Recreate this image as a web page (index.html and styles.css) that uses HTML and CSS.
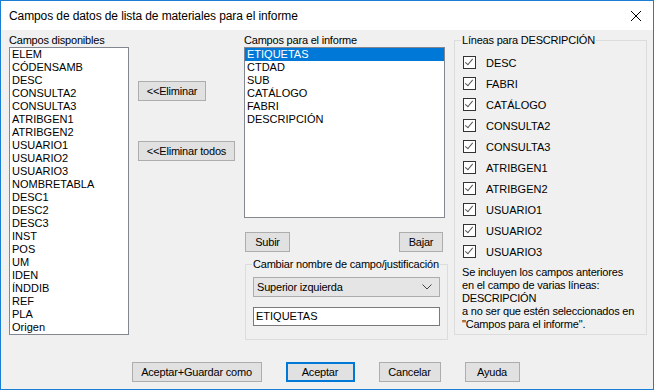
FILE: index.html
```html
<!DOCTYPE html>
<html lang="es">
<head>
  <meta charset="UTF-8" />
  <meta name="viewport" content="width=device-width, initial-scale=1.0" />
  <title>Campos de datos de lista de materiales para el informe</title>
  <link rel="stylesheet" href="styles.css">
</head>
<body>
  <div class="window">
    <div class="titlebar">
      <span class="title">Campos de datos de lista de materiales para el informe</span>
      <svg class="close" width="12" height="12" viewBox="0 0 12 12">
        <path d="M1 1 L11 11 M11 1 L1 11" stroke="#000" stroke-width="1" fill="none"/>
      </svg>
    </div>

    <div class="dialog">
      <div class="main">
        <!-- Campos disponibles -->
        <div class="col-avail">
          <div class="label">Campos disponibles</div>
          <ul class="listbox avail-list">
            <li>ELEM</li>
            <li>CÓDENSAMB</li>
            <li>DESC</li>
            <li>CONSULTA2</li>
            <li>CONSULTA3</li>
            <li>ATRIBGEN1</li>
            <li>ATRIBGEN2</li>
            <li>USUARIO1</li>
            <li>USUARIO2</li>
            <li>USUARIO3</li>
            <li>NOMBRETABLA</li>
            <li>DESC1</li>
            <li>DESC2</li>
            <li>DESC3</li>
            <li>INST</li>
            <li>POS</li>
            <li>UM</li>
            <li>IDEN</li>
            <li>ÍNDDIB</li>
            <li>REF</li>
            <li>PLA</li>
            <li>Origen</li>
          </ul>
        </div>

        <div class="col-actions">
          <button class="btn btn-remove">&lt;&lt;Eliminar</button>
          <button class="btn btn-remove-all">&lt;&lt;Eliminar todos</button>
        </div>

        <!-- Campos para el informe -->
        <div class="col-report">
          <div class="label">Campos para el informe</div>
          <ul class="listbox report-list">
            <li class="selected">ETIQUETAS</li>
            <li>CTDAD</li>
            <li>SUB</li>
            <li>CATÁLOGO</li>
            <li>FABRI</li>
            <li>DESCRIPCIÓN</li>
          </ul>
          <div class="move-row">
            <button class="btn btn-up">Subir</button>
            <button class="btn btn-down">Bajar</button>
          </div>
          <fieldset class="group rename-group">
            <legend>Cambiar nombre de campo/justificación</legend>
            <div class="combo">
              <span>Superior izquierda</span>
              <svg width="10" height="6" viewBox="0 0 10 6">
                <path d="M0.5 0.5 L5 5 L9.5 0.5" stroke="#444" stroke-width="1" fill="none"/>
              </svg>
            </div>
            <div class="textbox">ETIQUETAS</div>
          </fieldset>
        </div>

        <!-- Líneas para DESCRIPCIÓN -->
        <fieldset class="group lines-group">
          <legend>Líneas para DESCRIPCIÓN</legend>
          <ul class="checklist">
            <li><span class="check"></span>DESC</li>
            <li><span class="check"></span>FABRI</li>
            <li><span class="check"></span>CATÁLOGO</li>
            <li><span class="check"></span>CONSULTA2</li>
            <li><span class="check"></span>CONSULTA3</li>
            <li><span class="check"></span>ATRIBGEN1</li>
            <li><span class="check"></span>ATRIBGEN2</li>
            <li><span class="check"></span>USUARIO1</li>
            <li><span class="check"></span>USUARIO2</li>
            <li><span class="check"></span>USUARIO3</li>
          </ul>
          <p class="note">Se incluyen los campos anteriores<br>en el campo de varias líneas:<br>DESCRIPCIÓN<br>a no ser que estén seleccionados en<br>"Campos para el informe".</p>
        </fieldset>
      </div>

      <div class="footer">
        <button class="btn btn-save">Aceptar+Guardar como</button>
        <button class="btn btn-ok">Aceptar</button>
        <button class="btn btn-cancel">Cancelar</button>
        <button class="btn btn-help">Ayuda</button>
      </div>
    </div>
  </div>
</body>
</html>
```

FILE: styles.css
```css
html, body {
  margin: 0;
  padding: 0;
}

*, *::before, *::after {
  box-sizing: border-box;
}

body {
  font-family: "Liberation Sans", Arial, sans-serif;
  font-size: 11px;
  color: #000;
  background: #fff;
}

.window {
  width: 654px;
  height: 390px;
  border: 1px solid #1a7fd4;
  background: #f0f0f0;
  display: flex;
  flex-direction: column;
  overflow: hidden;
}

.titlebar {
  height: 29px;
  background: #fff;
  display: flex;
  align-items: center;
  justify-content: space-between;
  padding: 0 11px 0 8px;
}

.title {
  font-size: 12px;
  letter-spacing: -0.1px;
}

.close {
  display: block;
}

.dialog {
  flex: 1;
  display: flex;
  flex-direction: column;
}

.main {
  display: flex;
  align-items: flex-start;
  padding: 4px 0 0 8px;
}

.label {
  height: 13px;
  line-height: 13px;
  letter-spacing: -0.2px;
  white-space: nowrap;
}

.listbox {
  list-style: none;
  margin: 0;
  padding: 0;
  background: #fff;
  border: 1px solid #828790;
  line-height: 13px;
}

.listbox li {
  padding-left: 2px;
  height: 13px;
  white-space: nowrap;
}

.listbox li.selected {
  background: #0078d7;
  color: #fff;
}

.col-avail {
  width: 120px;
}

.avail-list {
  height: 288px;
}

.btn {
  font-family: inherit;
  font-size: 11px;
  letter-spacing: -0.2px;
  color: #000;
  height: 20px;
  padding: 0;
  background: #e1e1e1;
  border: 1px solid #adadad;
  border-radius: 0;
  white-space: nowrap;
}

.col-actions {
  margin-left: 9px;
  width: 97px;
  padding-top: 47px;
  display: flex;
  flex-direction: column;
  align-items: flex-start;
  gap: 40px;
}

.btn-remove {
  width: 68px;
}

.btn-remove-all {
  width: 97px;
}

.col-report {
  margin-left: 9px;
  width: 201px;
}

.report-list {
  height: 171px;
}

.move-row {
  display: flex;
  justify-content: space-between;
  margin-top: 14px;
  padding: 0 2px 0 1px;
}

.btn-up {
  width: 45px;
}

.btn-down {
  width: 44px;
}

.group {
  margin: 0;
  border: 1px solid #dcdcdc;
  padding: 0 7px;
}

.group legend {
  padding: 0 1px;
  margin-left: -1px;
  line-height: 13px;
  letter-spacing: -0.2px;
  white-space: nowrap;
}

.rename-group {
  margin: 6px 1px 0 1px;
  height: 82px;
  padding-top: 6px;
}

.combo {
  height: 20px;
  background: #e5e5e5;
  border: 1px solid #acacac;
  display: flex;
  align-items: center;
  justify-content: space-between;
  padding: 0 7px 0 3px;
  letter-spacing: -0.2px;
}

.combo svg {
  display: block;
}

.textbox {
  margin-top: 10px;
  height: 19px;
  line-height: 17px;
  background: #fff;
  border: 1px solid #7a7a7a;
  padding-left: 2px;
}

.lines-group {
  margin-left: 9px;
  width: 193px;
  height: 301px;
}

.checklist {
  list-style: none;
  margin: 5px 0 0 0;
  padding: 0;
}

.checklist li {
  height: 21px;
  display: flex;
  align-items: center;
  padding-left: 1px;
}

.check {
  width: 13px;
  height: 13px;
  border: 1px solid #333;
  background: #fff;
  margin-right: 10px;
  position: relative;
}

.check::after {
  content: "";
  position: absolute;
  left: 3px;
  top: 0px;
  width: 4px;
  height: 8px;
  border: solid #555;
  border-width: 0 1px 1px 0;
  transform: rotate(40deg);
}

.note {
  margin: 4px 0 0 0;
  line-height: 13px;
  letter-spacing: -0.2px;
  white-space: nowrap;
}

.footer {
  margin-top: 22px;
  display: flex;
  justify-content: center;
  gap: 24px;
  padding-right: 3px;
}

.btn-save {
  width: 130px;
}

.btn-ok {
  width: 69px;
  border: 2px solid #0078d7;
}

.btn-cancel {
  width: 62px;
}

.btn-help {
  width: 55px;
}
```
